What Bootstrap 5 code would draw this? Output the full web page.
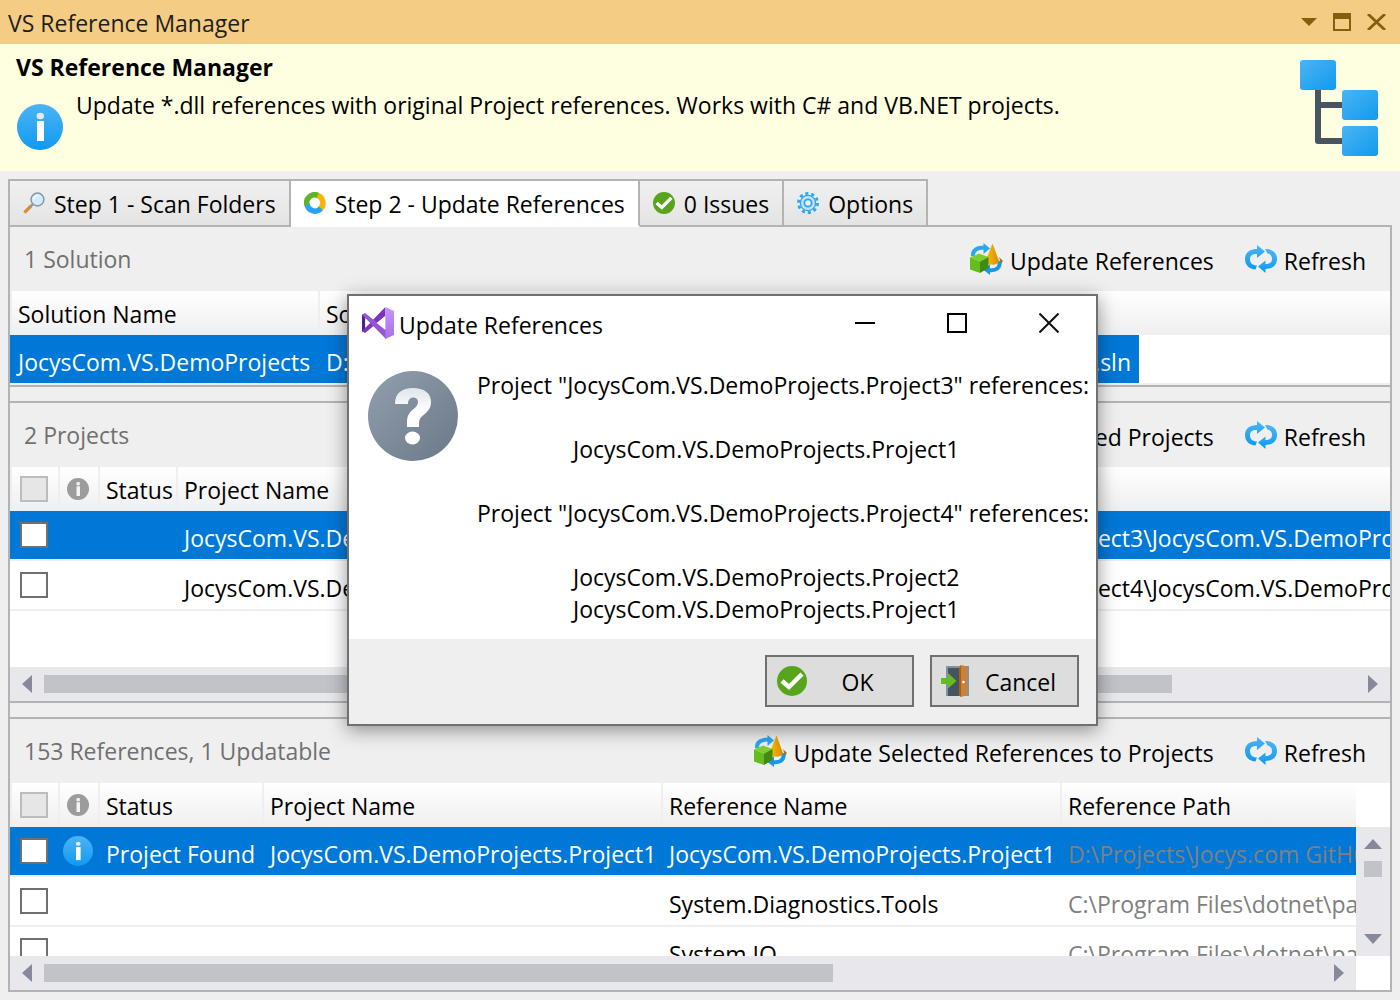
<!DOCTYPE html>
<html lang="en">
<head>
<meta charset="utf-8">
<meta name="viewport" content="width=device-width, initial-scale=1">
<title>VS Reference Manager</title>
<link href="https://cdn.jsdelivr.net/npm/bootstrap@5.3.0/dist/css/bootstrap.min.css" rel="stylesheet">
<style>
  body { font-family: "Open Sans", "Noto Sans", sans-serif; font-size: 23px; line-height: 32px; color: #000; background: #efefef; }
  svg { display: block; flex: none; }
  button { color: inherit; }
  .bare { border: 0; background: none; padding: 0; }
  .titlebar { height: 44px; background: #f5cc84; color: #1e1e1e; padding: 0 14px 0 8px; }
  .titlebar h1 { font-size: 23px; line-height: 32px; font-weight: 400; padding-top: 2px; }
  .intro { background: #feffe0; padding: 7px 22px 15px 16px; }
  .intro h2 { font-size: 23px; line-height: 32px; font-weight: 700; margin-bottom: 6px; }
  .intro .info-icon { margin: 15px 13px 0 1px; }
  .intro .tree-icon { margin-top: 9px; }
  .workspace { padding: 8px; min-height: 0; }

  .tabs { position: relative; z-index: 1; margin-bottom: -2px; }
  .tabs button { display: flex; align-items: center; gap: 9px; height: 48px; padding: 2px 13px 0 13px; border: 2px solid #b3b3b3; border-left-width: 0; background: linear-gradient(#f0f0f0, #e4e4e4); white-space: nowrap; }
  .tabs button:first-child { border-left-width: 2px; }
  .tabs button.active { background: #fff; border-bottom-color: #fff; }
  .tabs button svg { margin-top: -2px; }

  .panes { border: 2px solid #b3b3b3; min-height: 0; }
  .splitter + .pane { border-top: 2px solid #b3b3b3; }
  .splitter { height: 14px; border-top: 2px solid #b3b3b3; box-sizing: content-box; }
  .toolstrip { height: 64px; padding: 0 24px 0 14px; gap: 31px; white-space: nowrap; }
  .toolstrip .caption { color: #707070; }
  .toolstrip button { display: flex; align-items: center; gap: 7px; padding-top: 4px; }
  .toolstrip button svg { margin-top: -4px; }

  .sheet { background: #fff; overflow: hidden; min-width: 0; }
  .sheet.tall { height: 200px; }
  .sheet table { table-layout: fixed; width: 100%; border-collapse: separate; border-spacing: 0; white-space: nowrap; }
  .sheet th { height: 44px; padding: 2px 0 0 6px; font-weight: 400; border-left: 2px solid #efefef; background: linear-gradient(#fff, #efefef); line-height: 32px; vertical-align: middle; overflow: hidden; }
  .sheet th.filler, .sheet th:empty { border-left: 0; }
  .sheet td { height: 50px; padding: 6px 0 0 8px; border-bottom: 2px solid #efefef; vertical-align: middle; overflow: hidden; }
  .sheet tr.picked td { background: #0078d7; background-clip: padding-box; color: #fff; }
  .sheet td.filler { background: #fff !important; }
  .sheet td.tick, .sheet td.mark-cell { padding-top: 0; }
  .sheet th.tick { padding: 0 0 0 8px; }
  .sheet td.tick { padding-left: 10px; }
  .sheet th.mark-cell { padding: 0 0 0 6px; }
  .sheet td.mark-cell { padding-left: 5px; }
  .sheet td.path, .sheet tr.picked td.path { color: #808080; }
  .sheet input { appearance: none; display: block; width: 28px; height: 26px; margin: 0; border: 2px solid #707070; background: #fff; }
  .sheet input:disabled { border-color: #bcbcbc; background: #e6e6e6; }

  .hbar { height: 34px; background: #e8e8ec; }
  .hbar button, .vbar button { width: 34px; height: 34px; display: flex; align-items: center; justify-content: center; }
  .hbar .thumb { height: 18px; background: #c2c3c9; }
  .vbar { width: 34px; background: #fff; }
  .vbar .rail { background: #e8e8ec; min-height: 0; }
  .vbar .lead-in { height: 44px; }
  .vbar .thumb { width: 18px; height: 16px; background: #c2c3c9; }

  .dialog-box { position: absolute; left: 347px; top: 294px; width: 751px; z-index: 5; background: #fff; border: 2px solid #707070; box-shadow: 0 4px 18px rgba(0,0,0,.42); margin: 0; padding: 0; }
  .dialog-title { height: 54px; padding: 0 37px 0 13px; gap: 5px; }
  .dialog-title h3 { font-size: 23px; line-height: 32px; font-weight: 400; padding-top: 3px; }
  .dialog-title .window-buttons { gap: 72px; }
  .dialog-body { padding: 19px 16px 14px 19px; gap: 19px; }
  .dialog-body svg { margin-top: 2px; }
  .dialog-body p { margin: 0 0 32px; }
  .dialog-body .nested { padding-left: 96px; }
  .dialog-body .nested:last-child { margin: 0; }
  .dialog-foot { background: #efefef; padding: 16px 17px 17px; gap: 16px; }
  .dialog-foot button { display: flex; align-items: center; height: 52px; width: 149px; border: 2px solid #707070; background: #ddd; padding: 0 7px 0 9px; }
  .dialog-foot button span { flex: 1; text-align: center; padding: 2px 0 0 2px; }
</style>
</head>
<body class="d-flex flex-column vh-100 overflow-hidden">

<svg width="0" height="0" class="position-absolute" aria-hidden="true">
  <defs>
    <linearGradient id="blueDown" x1="0" y1="0" x2="0" y2="1"><stop offset="0" stop-color="#4db4f4"/><stop offset="1" stop-color="#0f9af0"/></linearGradient>
    <linearGradient id="blueDiag" x1="0" y1="0" x2="1" y2="1"><stop offset="0" stop-color="#4db4f4"/><stop offset="1" stop-color="#109aee"/></linearGradient>
    <linearGradient id="slate" x1="0" y1="0" x2="1" y2="1"><stop offset="0" stop-color="#919fae"/><stop offset="1" stop-color="#6b7888"/></linearGradient>
    <linearGradient id="paleDown" x1="0" y1="0" x2="0" y2="1"><stop offset="0" stop-color="#dfe5ea"/><stop offset=".6" stop-color="#fff"/></linearGradient>
    <linearGradient id="gold" x1="0" y1="0" x2="1" y2="0"><stop offset="0" stop-color="#fcbf0a"/><stop offset="1" stop-color="#d98c00"/></linearGradient>
    <linearGradient id="violet" x1="0" y1="0" x2="0" y2="1"><stop offset="0" stop-color="#c596f8"/><stop offset="1" stop-color="#a970ec"/></linearGradient>
    <symbol id="i-info" viewBox="0 0 46 46"><circle cx="23" cy="23" r="23" fill="url(#blueDown)"/><ellipse cx="23.300" cy="12" rx="3.700" ry="3.200" fill="#e3eaf0"/><rect x="20" y="17" width="7" height="20" fill="#fff"/></symbol>
    <symbol id="i-info-gray" viewBox="0 0 22 22"><circle cx="11" cy="11" r="11" fill="#9c9c9c"/><circle cx="11.200" cy="5.700" r="1.900" fill="#eee"/><rect x="9.500" y="8.300" width="3.500" height="9.700" fill="#f4f4f4"/></symbol>
    <symbol id="i-check" viewBox="0 0 30 30"><circle cx="15" cy="15" r="15" fill="#58a41c"/><path d="M5 15 12 21 25 8" fill="none" stroke="#fff" stroke-width="4.500"/></symbol>
    <symbol id="i-refresh" viewBox="0 0 32 28"><path d="M12 20.500H11C7 20 5 17.500 5 14S7.500 9 11 9H12V13L20 6.500 12 0V4C5 4 0 7.500 0 14C0 20.500 4.500 24 10.500 24.500Z" fill="url(#blueDown)"/><path d="M20 4C27.500 4 32 7.500 32 14C32 20.500 27 24 20.500 24V28L13 21.500 20.500 15.500V19C24.500 19 27 17.500 27 14S25 9 22.500 8.500Z" fill="url(#blueDown)"/></symbol>
    <symbol id="i-update" viewBox="0 0 33 32"><path d="M3 13C2.500 7 7 4.500 15 4.500" fill="none" stroke="#2ca6f2" stroke-width="4"/><path d="M19 27C26 28 30.500 25 29.500 18" fill="none" stroke="#1499ee" stroke-width="4"/><path d="M13.500 0 20 5.500 13.500 11Z" fill="#2ca6f2"/><path d="M20 21 13.500 27 20 32Z" fill="#1499ee"/><path d="M29 14 33 18 31 21Z" fill="#9c7430"/><path d="M22.500 0.500 29 18C28.500 20.500 26 21.800 22.500 21.800C19 21.800 16.500 20.500 15.500 18Z" fill="url(#gold)"/><path d="M0 14.500 9 10.500 18.500 14 10 18.500Z" fill="#7ccf32"/><path d="M0 14.500 10 18.500V30L0 26.500Z" fill="#62bd1d"/><path d="M10 18.500 18.500 14V25L10 30Z" fill="#458a10"/></symbol>
    <symbol id="i-left" viewBox="0 0 10 18"><path d="M10 0V18L0 9Z" fill="#868999"/></symbol>
    <symbol id="i-right" viewBox="0 0 10 18"><path d="M0 0V18L10 9Z" fill="#868999"/></symbol>
  </defs>
</svg>

<header class="titlebar d-flex align-items-center">
  <h1 class="m-0 me-auto">VS Reference Manager</h1>
  <div class="d-flex align-items-center gap-3">
    <button class="bare" aria-label="Window menu"><svg width="16" height="8" viewBox="0 0 16 8"><path d="M0 0H16L8 8Z" fill="#855f0c"/></svg></button>
    <button class="bare" aria-label="Maximize window"><svg width="18" height="18" viewBox="0 0 18 18"><path d="M0 0H18V18H0ZM2 6V16H16V6Z" fill="#855f0c" fill-rule="evenodd"/></svg></button>
    <button class="bare" aria-label="Close window"><svg width="19" height="16" viewBox="0 0 19 16"><path d="M1 0 18 16M18 0 1 16" stroke="#855f0c" stroke-width="2.800" fill="none"/></svg></button>
  </div>
</header>

<section class="intro d-flex justify-content-between">
  <div>
    <h2>VS Reference Manager</h2>
    <div class="d-flex">
      <svg class="info-icon" width="46" height="46"><use href="#i-info"/></svg>
      <span>Update *.dll references with original Project references. Works with C# and VB.NET projects.</span>
    </div>
  </div>
  <svg class="tree-icon" width="78" height="96" viewBox="0 0 78 96"><path d="M18 28V81H44M18 45H44" fill="none" stroke="#475462" stroke-width="6" stroke-linejoin="round"/><g fill="url(#blueDiag)"><rect width="36" height="30" rx="3"/><rect x="42" y="30" width="36" height="30" rx="3"/><rect x="42" y="66" width="36" height="30" rx="3"/></g></svg>
</section>

<main class="workspace flex-fill d-flex flex-column">
  <nav class="tabs d-flex" role="tablist">
    <button role="tab"><svg width="22" height="22" viewBox="0 0 24 24"><path d="M1.500 22.500 9 15" stroke="#d98a35" stroke-width="3.500"/><path d="M8.500 15.500 11 13" stroke="#8795a5" stroke-width="2.500"/><circle cx="15.800" cy="8.200" r="7" fill="#d3ecfc" stroke="#8795a5" stroke-width="1.600"/><path d="M11.500 8A5 5 0 0 1 16 4" stroke="#fff" fill="none" stroke-width="1.500"/></svg>Step 1 - Scan Folders</button>
    <button role="tab" class="active" aria-selected="true"><svg width="22" height="22" viewBox="0 0 24 24" fill="none" stroke-width="6"><path d="M13 3.200A8.800 8.800 0 0 1 17 19" stroke="#f4b305"/><path d="M18.500 18A8.800 8.800 0 0 1 3.300 13" stroke="#27a3f1"/><path d="M3.200 14A8.800 8.800 0 0 1 15 3.600" stroke="#5db526"/></svg>Step 2 - Update References</button>
    <button role="tab"><svg width="22" height="22"><use href="#i-check"/></svg>0 Issues</button>
    <button role="tab"><svg width="22" height="22" viewBox="0 0 24 24"><circle cx="12" cy="12" r="10.500" fill="none" stroke="#2da7f2" stroke-width="3" stroke-dasharray="3.400 3.197"/><circle cx="12" cy="12" r="8.300" fill="#c4e6fb" stroke="#2da7f2" stroke-width="1.500"/><circle cx="12" cy="12" r="4" fill="#efefef" stroke="#2da7f2" stroke-width="2"/></svg>Options</button>
  </nav>

  <div class="panes flex-fill d-flex flex-column">
    <section class="pane">
      <div class="toolstrip d-flex align-items-center">
        <span class="caption me-auto">1 Solution</span>
        <button class="bare"><svg width="33" height="32"><use href="#i-update"/></svg>Update References</button>
        <button class="bare"><svg width="32" height="28"><use href="#i-refresh"/></svg>Refresh</button>
      </div>
      <div class="sheet">
        <table>
          <colgroup><col style="width:308px"><col style="width:821px"><col></colgroup>
          <thead><tr><th>Solution Name</th><th>Solution Path</th><th class="filler"></th></tr></thead>
          <tbody><tr class="picked"><td>JocysCom.VS.DemoProjects</td><td><div class="d-flex justify-content-between pe-2"><span>D:\Projects\Jocys.com GitHub\VS\</span><span>JocysCom.VS.DemoProjects.sln</span></div></td><td class="filler"></td></tr></tbody>
        </table>
      </div>
    </section>
    <div class="splitter"></div>
    <section class="pane">
      <div class="toolstrip d-flex align-items-center">
        <span class="caption me-auto">2 Projects</span>
        <button class="bare"><svg width="33" height="32"><use href="#i-update"/></svg>Update Selected Projects</button>
        <button class="bare"><svg width="32" height="28"><use href="#i-refresh"/></svg>Refresh</button>
      </div>
      <div class="sheet tall">
        <table>
          <colgroup><col style="width:48px"><col style="width:40px"><col style="width:78px"><col style="width:399px"><col></colgroup>
          <thead><tr><th class="tick"><input type="checkbox" disabled aria-label="Select all projects"></th><th class="mark-cell"><svg width="24" height="22"><use href="#i-info-gray"/></svg></th><th>Status</th><th>Project Name</th><th>Project Path</th></tr></thead>
          <tbody>
            <tr class="picked"><td class="tick"><input type="checkbox" aria-label="Select Project3"></td><td></td><td></td><td>JocysCom.VS.DemoProjects.Project3</td><td>D:\Projects\Jocys.com GitHub\VS\Demos\UI\Project3\JocysCom.VS.DemoProjects.Project3.csproj</td></tr>
            <tr><td class="tick"><input type="checkbox" aria-label="Select Project4"></td><td></td><td></td><td>JocysCom.VS.DemoProjects.Project4</td><td>D:\Projects\Jocys.com GitHub\VS\Demos\UI\Project4\JocysCom.VS.DemoProjects.Project4.csproj</td></tr>
          </tbody>
        </table>
      </div>
      <div class="hbar d-flex align-items-center">
        <button class="bare" aria-label="Scroll left"><svg width="10" height="18"><use href="#i-left"/></svg></button>
        <div class="flex-fill"><div class="thumb" style="width:86%"></div></div>
        <button class="bare" aria-label="Scroll right"><svg width="10" height="18"><use href="#i-right"/></svg></button>
      </div>
    </section>
    <div class="splitter"></div>
    <section class="pane flex-fill d-flex flex-column" style="min-height:0">
      <div class="toolstrip d-flex align-items-center flex-shrink-0">
        <span class="caption me-auto">153 References, 1 Updatable</span>
        <button class="bare"><svg width="33" height="32"><use href="#i-update"/></svg>Update Selected References to Projects</button>
        <button class="bare"><svg width="32" height="28"><use href="#i-refresh"/></svg>Refresh</button>
      </div>
      <div class="flex-fill d-flex" style="min-height:0">
        <div class="flex-fill d-flex flex-column" style="min-width:0">
          <div class="sheet" style="flex:1 1 0">
            <table>
              <colgroup><col style="width:48px"><col style="width:40px"><col style="width:164px"><col style="width:399px"><col style="width:399px"><col></colgroup>
              <thead><tr><th class="tick"><input type="checkbox" disabled aria-label="Select all references"></th><th class="mark-cell"><svg width="24" height="22"><use href="#i-info-gray"/></svg></th><th>Status</th><th>Project Name</th><th>Reference Name</th><th>Reference Path</th></tr></thead>
              <tbody>
                <tr class="picked"><td class="tick"><input type="checkbox" aria-label="Select Project1"></td><td class="mark-cell"><svg width="30" height="30"><use href="#i-info"/></svg></td><td>Project Found</td><td>JocysCom.VS.DemoProjects.Project1</td><td>JocysCom.VS.DemoProjects.Project1</td><td class="path">D:\Projects\Jocys.com GitHub</td></tr>
                <tr><td class="tick"><input type="checkbox" aria-label="Select System.Diagnostics.Tools"></td><td></td><td></td><td></td><td>System.Diagnostics.Tools</td><td class="path">C:\Program Files\dotnet\packs</td></tr>
                <tr><td class="tick"><input type="checkbox" aria-label="Select System.IO"></td><td></td><td></td><td></td><td>System.IO</td><td class="path">C:\Program Files\dotnet\packs</td></tr>
              </tbody>
            </table>
          </div>
          <div class="hbar d-flex align-items-center flex-shrink-0">
            <button class="bare" aria-label="Scroll left"><svg width="10" height="18"><use href="#i-left"/></svg></button>
            <div class="flex-fill"><div class="thumb" style="width:61.7%"></div></div>
            <button class="bare" aria-label="Scroll right"><svg width="10" height="18"><use href="#i-right"/></svg></button>
          </div>
        </div>
        <div class="vbar d-flex flex-column flex-shrink-0">
          <div class="lead-in"></div>
          <div class="rail flex-fill d-flex flex-column align-items-center">
            <button class="bare" aria-label="Scroll up"><svg width="18" height="10" viewBox="0 0 18 10"><path d="M0 10H18L9 0Z" fill="#868999"/></svg></button>
            <div class="thumb"></div>
            <button class="bare mt-auto" aria-label="Scroll down"><svg width="18" height="10" viewBox="0 0 18 10"><path d="M0 0H18L9 10Z" fill="#868999"/></svg></button>
          </div>
          <div style="height:34px"></div>
        </div>
      </div>
    </section>
  </div>
</main>

<div class="dialog-box" role="dialog" aria-labelledby="dlgTitle">
  <div class="dialog-title d-flex align-items-center">
    <svg width="32" height="32" viewBox="0 0 96 96"><path d="M0 23 10 19V77L0 73Z" fill="#52218a"/><path d="M0 73 70 0V27L12 76 9 77Z" fill="#7a36bd"/><path d="M0 23 9 19 12 20 72 68V96Z" fill="#9455d6"/><path d="M10 35V61L24 48Z" fill="#fff"/><path d="M44 48 70 27V69Z" fill="#fff"/><path d="M70 0 96 12V84L70 96Z" fill="url(#violet)"/></svg>
    <h3 class="m-0 me-auto" id="dlgTitle">Update References</h3>
    <div class="window-buttons d-flex align-items-center">
      <button class="bare" aria-label="Minimize"><svg width="20" height="20" viewBox="0 0 20 20"><path d="M0 10H20" stroke="#000" stroke-width="2"/></svg></button>
      <button class="bare" aria-label="Maximize"><svg width="20" height="20" viewBox="0 0 20 20"><path d="M1 1H19V19H1Z" stroke="#000" stroke-width="2" fill="none"/></svg></button>
      <button class="bare" aria-label="Close"><svg width="20" height="20" viewBox="0 0 20 20"><path d="M.500 .500 19.500 19.500M19.500 .500 .500 19.500" stroke="#111" stroke-width="2" fill="none"/></svg></button>
    </div>
  </div>
  <div class="dialog-body d-flex">
    <svg width="90" height="90" viewBox="0 0 90 90"><circle cx="45" cy="45" r="45" fill="url(#slate)"/><path d="M27 33C27 22 34 17 45 17C56 17 63 22 63 31C63 38 59 41 55 44.500C52 47 51 49 51 52V56H39V51C39 45 41 42 45 38.500C48 36 50 34 50 31C50 28 48 26.500 45.500 26.500C42 26.500 40 29 40 33Z" fill="url(#paleDown)"/><ellipse cx="44.500" cy="67" rx="7.500" ry="6.500" fill="#fff"/></svg>
    <div class="flex-fill text-nowrap">
      <p>Project "JocysCom.VS.DemoProjects.Project3" references:</p>
      <p class="nested">JocysCom.VS.DemoProjects.Project1</p>
      <p>Project "JocysCom.VS.DemoProjects.Project4" references:</p>
      <p class="nested">JocysCom.VS.DemoProjects.Project2<br>JocysCom.VS.DemoProjects.Project1</p>
    </div>
  </div>
  <div class="dialog-foot d-flex justify-content-end">
    <button><svg width="32" height="30" viewBox="0 0 32 30"><use href="#i-check" width="30" height="30" x="1"/></svg><span>OK</span></button>
    <button><svg width="28" height="32" viewBox="0 0 28 32"><path d="M5 1H28V31H5Z" fill="#8392a3"/><path d="M7 3H19V31H7Z" fill="#465361"/><path d="M18 3 20 0 26 1.500V30L20 32 18 30Z" fill="#d0802f"/><path d="M18 3 20 0V32L18 30Z" fill="#a8611c"/><circle cx="22.500" cy="17" r="1.300" fill="#fff"/><path d="M0 13H7V8L15.500 16 7 23.500V19H0Z" fill="#63bd20"/></svg><span>Cancel</span></button>
  </div>
</div>

<script src="https://cdn.jsdelivr.net/npm/bootstrap@5.3.0/dist/js/bootstrap.bundle.min.js"></script>
</body>
</html>
